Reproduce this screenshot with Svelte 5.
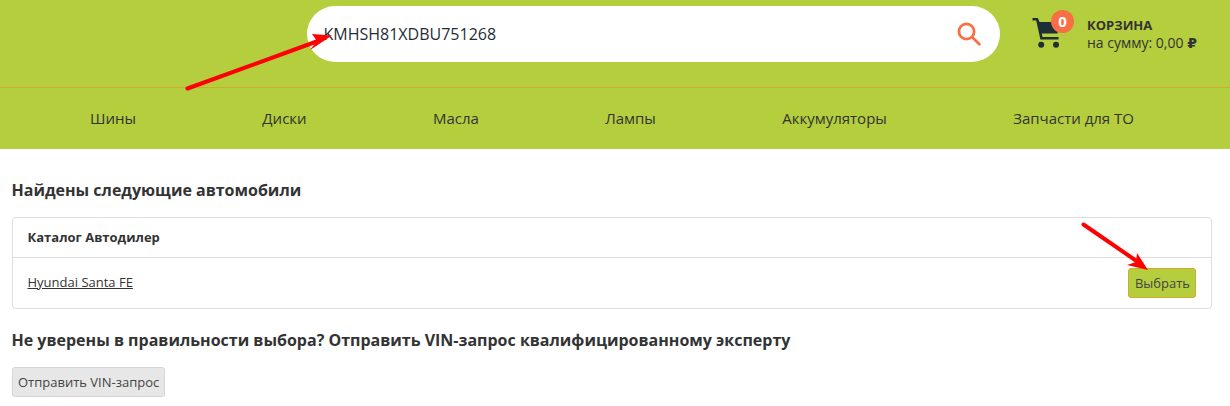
<script>
  let vin = 'KMHSH81XDBU751268';
  const menu = ['Шины', 'Диски', 'Масла', 'Лампы', 'Аккумуляторы', 'Запчасти для ТО'];
</script>

<div class="page">
  <header class="header">
    <div class="top">
      <form class="search" on:submit|preventDefault>
        <input class="search-input" bind:value={vin} />
        <button class="search-btn" type="submit" aria-label="Поиск">
          <svg width="26" height="26" viewBox="0 0 26 26" fill="none" stroke="#f96f45" stroke-width="2.8" stroke-linecap="round">
            <circle cx="10.5" cy="10.5" r="7.6"/>
            <line x1="16.2" y1="16.2" x2="23.4" y2="23.2"/>
          </svg>
        </button>
      </form>
      <div class="cart">
        <div class="cart-icon">
          <svg width="30" height="32" viewBox="0 0 30 32">
            <path d="M0.5 1h5.4l1.6 4H28l-2.6 11.5H9.8l.7 3.6H26.5v2.4H8.4L4.2 3.6H0.5z" fill="#1f2d36"/>
            <circle cx="9.2" cy="27.8" r="3" fill="#1f2d36"/>
            <circle cx="24" cy="27.8" r="3" fill="#1f2d36"/>
          </svg>
          <span class="badge">0</span>
        </div>
        <div class="cart-text">
          <div class="cart-title">КОРЗИНА</div>
          <div class="cart-sum">на сумму: 0,00 <span class="rub">₽</span></div>
        </div>
      </div>
    </div>
    <nav class="nav">
      {#each menu as item}
        <a href="#/" class="nav-link">{item}</a>
      {/each}
    </nav>
  </header>

  <main class="content">
    <h2 class="title">Найдены следующие автомобили</h2>
    <div class="panel">
      <div class="panel-head">Каталог Автодилер</div>
      <div class="panel-row">
        <a href="#/" class="car-link">Hyundai Santa FE</a>
        <button class="btn btn-select">Выбрать</button>
      </div>
    </div>
    <h2 class="title second">Не уверены в правильности выбора? Отправить VIN-запрос квалифицированному эксперту</h2>
    <button class="btn btn-vin">Отправить VIN-запрос</button>
  </main>

  <!-- red annotation arrows drawn over the screenshot -->
  <svg class="arrows" width="1230" height="406" viewBox="0 0 1230 406">
    <line x1="187.5" y1="88.5" x2="318" y2="41" stroke="#f00" stroke-width="4" stroke-linecap="round"/>
    <path d="M332 35.5L312 34L317 41L310 50z" fill="#f00"/>
    <line x1="1083.5" y1="224.5" x2="1138" y2="262" stroke="#f00" stroke-width="4" stroke-linecap="round"/>
    <path d="M1148 270L1137 253L1136 262L1127 265z" fill="#f00"/>
  </svg>
</div>

<style>
  :global(body) {
    margin: 0;
    background: #fff;
  }

  .page {
    position: relative;
    height: 406px;
    overflow: hidden;
    font-family: "Open Sans", sans-serif;
    font-size: 13px;
    color: #333;
  }

  .header {
    background: #b5ce3e;
  }

  .top {
    display: flex;
    border-bottom: 1px solid #d3ab2c;
    padding: 6px 0 0 307px;
    box-sizing: border-box;
    height: 88px;
  }

  .search {
    display: flex;
    align-items: center;
    width: 693px;
    height: 56px;
    background: #fff;
    border-radius: 28px;
    box-sizing: border-box;
    padding: 0 18px 0 16.5px;
  }

  .search-input {
    flex: 1;
    border: none;
    outline: none;
    padding: 0;
    background: transparent;
    font-family: inherit;
    font-size: 16px;
    color: #1f2d36;
  }

  .search-btn {
    display: flex;
    padding: 0;
    border: none;
    background: none;
  }

  .cart {
    display: flex;
    margin-left: 32px;
    padding-top: 11px;
  }

  .cart-icon {
    position: relative;
    width: 55px;
    height: 34px;
  }

  .badge {
    position: absolute;
    left: 19px;
    top: -7px;
    width: 23px;
    height: 23px;
    border-radius: 50%;
    background: #f96f45;
    color: #fff;
    font-size: 15px;
    font-weight: 700;
    line-height: 23px;
    text-align: center;
  }

  .cart-text {
    line-height: 17px;
  }

  .cart-title {
    font-weight: 700;
    font-size: 13px;
  }

  .cart-sum {
    font-size: 14px;
  }

  .rub {
    font-family: "DejaVu Sans", sans-serif;
    font-weight: 700;
  }

  .nav {
    display: flex;
    gap: 126.3px;
    height: 61px;
    box-sizing: border-box;
    align-items: center;
    padding: 0 0 2px 90px;
  }

  .nav-link {
    font-size: 15px;
    color: #333;
    text-decoration: none;
  }

  .content {
    padding: 0 18px 0 12px;
  }

  .title {
    margin: 0 0 0 -0.5px;
    font-size: 16px;
    font-weight: 700;
    line-height: 22px;
    padding-top: 30px;
    color: #333;
  }

  .panel {
    margin-top: 16px;
    border: 1px solid #ddd;
    border-radius: 4px;
    height: 92px;
    box-sizing: border-box;
  }

  .panel-head {
    height: 39px;
    line-height: 39px;
    padding: 0 14.5px;
    font-weight: 700;
    font-size: 13px;
    border-bottom: 1px solid #ddd;
  }

  .panel-row {
    display: flex;
    align-items: center;
    justify-content: space-between;
    height: 50px;
    padding: 0 15px 0 14.5px;
  }

  .car-link {
    margin-top: -2px;
    font-size: 13px;
    color: #333;
    text-decoration: underline;
  }

  .btn {
    font-family: inherit;
    font-size: 13px;
    color: #444;
    border-radius: 3px;
    height: 30px;
    padding: 0 5px;
    cursor: pointer;
  }

  .btn-select {
    padding: 0 5px 0 5.5px;
    background: #b5ce3e;
    border: 1px solid #d3ab2c;
  }

  .btn-vin {
    margin-top: 16px;
    background: #e7e7e7;
    border: 1px solid #d5d5d5;
  }

  .second {
    padding-top: 20px;
  }

  .arrows {
    position: absolute;
    left: 0;
    top: 0;
    pointer-events: none;
  }
</style>
